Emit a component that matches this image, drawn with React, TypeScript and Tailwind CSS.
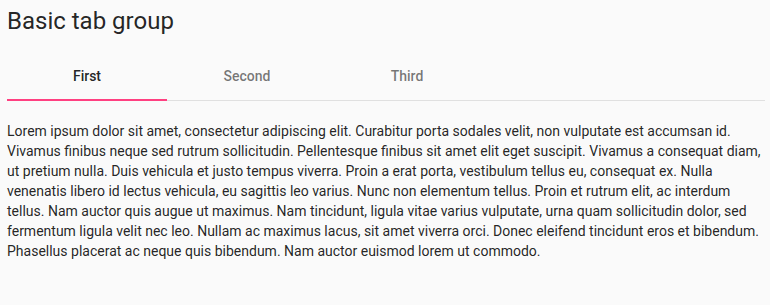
import { useState } from "react";

const tabs = ["First", "Second", "Third"];

const lorem =
  "Lorem ipsum dolor sit amet, consectetur adipiscing elit. Curabitur porta sodales velit, non vulputate est accumsan id. Vivamus finibus neque sed rutrum sollicitudin. Pellentesque finibus sit amet elit eget suscipit. Vivamus a consequat diam, ut pretium nulla. Duis vehicula et justo tempus viverra. Proin a erat porta, vestibulum tellus eu, consequat ex. Nulla venenatis libero id lectus vehicula, eu sagittis leo varius. Nunc non elementum tellus. Proin et rutrum elit, ac interdum tellus. Nam auctor quis augue ut maximus. Nam tincidunt, ligula vitae varius vulputate, urna quam sollicitudin dolor, sed fermentum ligula velit nec leo. Nullam ac maximus lacus, sit amet viverra orci. Donec eleifend tincidunt eros et bibendum. Phasellus placerat ac neque quis bibendum. Nam auctor euismod lorem ut commodo.";

export default function App() {
  const [active, setActive] = useState(0);

  return (
    <div className="min-h-[305px] bg-[#fafafa] text-black/[0.87] font-['Roboto',sans-serif] pl-[7px] pr-[5px] pt-[5px]">
      <h2 className="text-[24px] leading-[32px] font-normal mb-[15px]">Basic tab group</h2>

      {/* tab header */}
      <div className="flex border-b border-[#e0e0e0]">
        {tabs.map((label, i) => (
          <button
            key={label}
            onClick={() => setActive(i)}
            className={`relative w-[160px] h-[48px] text-[14px] font-medium ${i === active ? "text-black/[0.87]" : "text-black/[0.54]"}`}
          >
            {label}
            {i === active && <span className="absolute left-0 right-0 bottom-[-1px] h-[2px] bg-[#ff4081]" />}
          </button>
        ))}
      </div>

      <p className="text-[14px] leading-[20px] pt-[20px]">{lorem}</p>
    </div>
  );
}
